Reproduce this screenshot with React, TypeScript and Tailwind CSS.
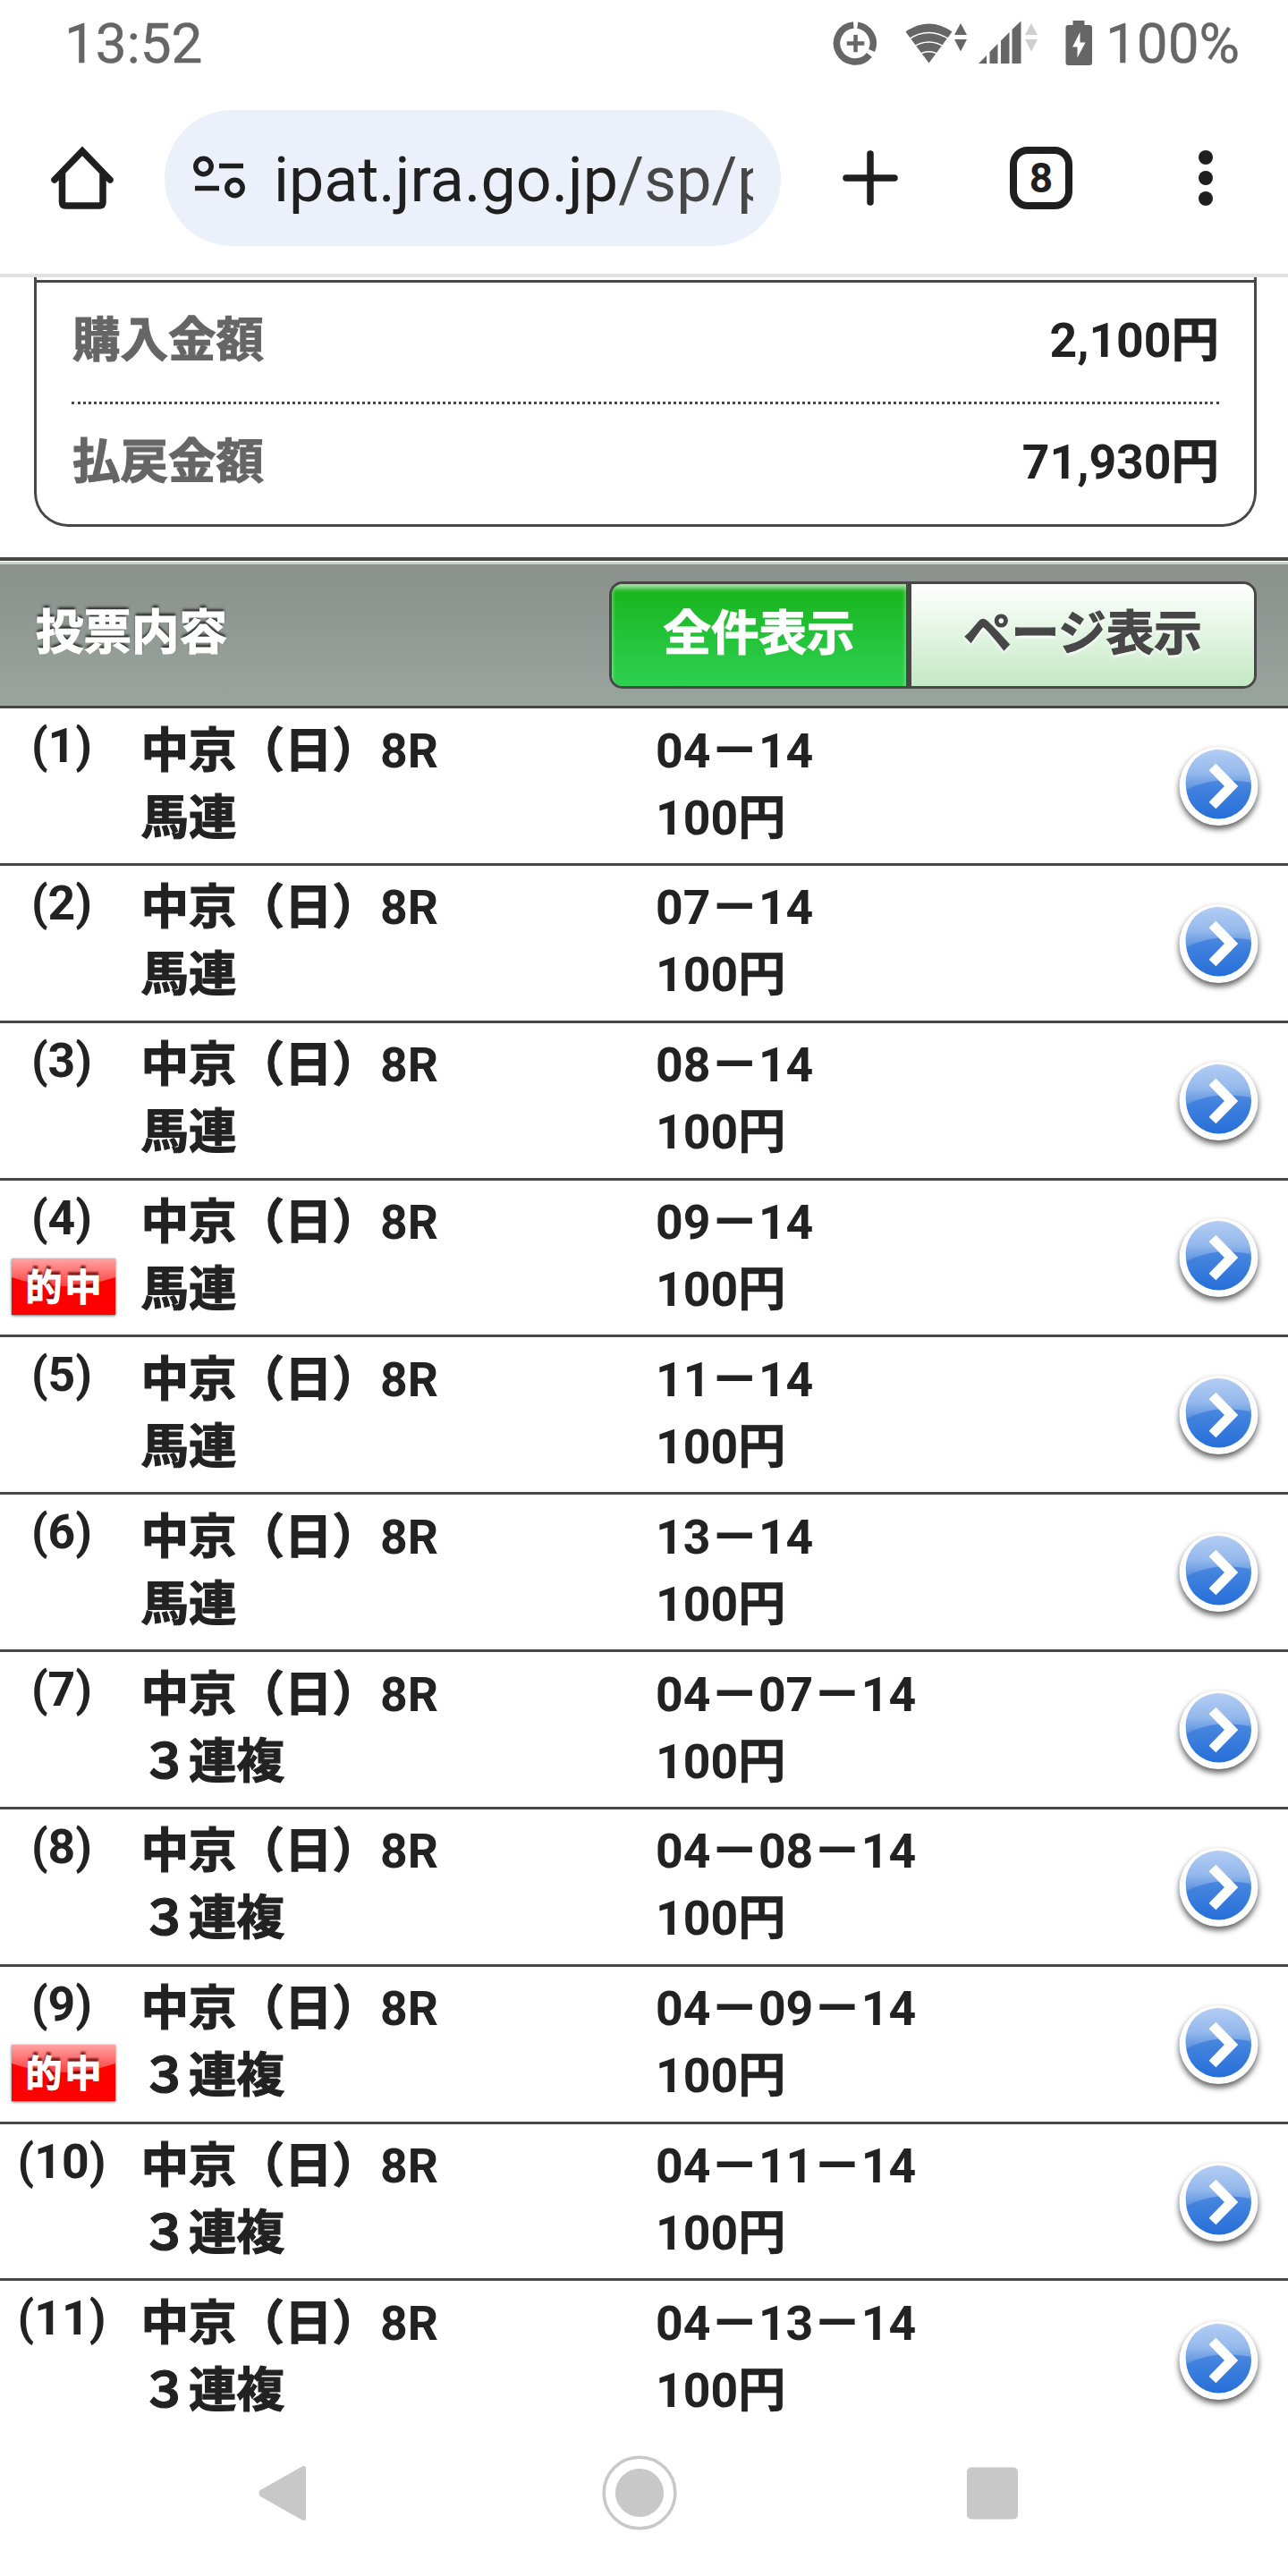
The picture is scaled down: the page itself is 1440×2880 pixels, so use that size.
import { clsx } from "clsx";

const BETS = [
  { no: 1, type: "馬連", combo: "04－14", hit: false },
  { no: 2, type: "馬連", combo: "07－14", hit: false },
  { no: 3, type: "馬連", combo: "08－14", hit: false },
  { no: 4, type: "馬連", combo: "09－14", hit: true },
  { no: 5, type: "馬連", combo: "11－14", hit: false },
  { no: 6, type: "馬連", combo: "13－14", hit: false },
  { no: 7, type: "３連複", combo: "04－07－14", hit: false },
  { no: 8, type: "３連複", combo: "04－08－14", hit: false },
  { no: 9, type: "３連複", combo: "04－09－14", hit: true },
  { no: 10, type: "３連複", combo: "04－11－14", hit: false },
  { no: 11, type: "３連複", combo: "04－13－14", hit: false },
];

function StatusIcons() {
  return (
    <svg width="300" height="56" viewBox="926 20 300 56" fill="#666">
      {/* Data saver */}
      <g fill="none" stroke="#666" strokeWidth="7.5">
        <path d="M958.8 27.1 A20.5 20.5 0 0 1 974.6 55.5" />
        <path d="M971.9 60.4 A20.5 20.5 0 1 1 954.3 27.1" />
      </g>
      <path d="M954.3 38h4.500v7.200h7.500v4.500h-7.500v7.500h-4.500v-7.500h-7.500v-4.500h7.500z" />
      {/* Wifi */}
      <path d="M1012.5 34.5 Q1038.5 16.5 1064.5 34.5 L1038.5 69.5z" />
      <g fill="none" stroke="#fff" strokeWidth="1.6">
        <path d="M1015 43.5 Q1038.5 27.500 1062 43.5" />
        <path d="M1020 52 Q1038.500 40 1057 52" />
        <path d="M1026 61 Q1038.500 52.500 1051 61" />
      </g>
      <path d="M1067 38 L1074 25 L1081 38z M1067 43 H1081 L1074 56.500z" />
      {/* Mobile signal */}
      <path d="M1094 70 L1103 61 V70z M1106.500 57 L1115.500 48 V70 H1106.500z M1119 44.500 L1128.500 35 V70 H1119z M1131.500 32 L1141.500 22.500 V70 H1131.500z" />
      <path fill="#cfcfcf" d="M1146 38 L1153 25 L1160 38z M1146 43 H1160 L1153 56.500z" />
      {/* Battery */}
      <path d="M1199.500 22h13v5h5.500q3 0 3 3v39q0 3-3 3h-23.500q-3 0-3-3v-39q0-3 3-3h5z" />
      <path fill="#fff" d="M1207.500 35 L1199 51.500 H1204.500 V63.500 L1213.500 46.500 H1207.500z" />
    </svg>
  );
}

function ArrowBadge() {
  return (
    <svg className="mt-[1px]" width="110" height="110" viewBox="-55.5 -55 110 110">
      <defs>
        <linearGradient id="blue" x1="0" y1="0" x2="0" y2="1">
          <stop offset="0" stopColor="#6f9fe6" />
          <stop offset="0.5" stopColor="#4483dd" />
          <stop offset="1" stopColor="#256fd9" />
        </linearGradient>
        <linearGradient id="shine" x1="0" y1="0" x2="0" y2="1">
          <stop offset="0" stopColor="#b4cdf3" />
          <stop offset="0.6" stopColor="#94b8ec" />
          <stop offset="1" stopColor="#5a91e1" />
        </linearGradient>
        <filter id="soft" x="-30%" y="-30%" width="160%" height="160%">
          <feGaussianBlur stdDeviation="3.5" />
        </filter>
      </defs>
      <circle cy="4" r="44" fill="#000" opacity="0.65" filter="url(#soft)" />
      <circle r="44" fill="#fff" />
      <circle r="36.500" fill="url(#blue)" />
      <path d="M-36 4 A36.500 36.500 0 1 1 36 -4 Q8 -9 -10 -5 Q-24 -2 -36 4z" fill="url(#shine)" />
      <path d="M-7 -21.500 L14 0 L-7 21.500" fill="none" stroke="#fff" strokeWidth="11" />
    </svg>
  );
}

function HitBadge() {
  return (
    <span className="relative ml-[3px] mt-[10px] flex h-[63px] w-[116px] items-center justify-center bg-[#fe0000] shadow-[0_1px_3px_rgba(0,0,0,0.6)]">
      <svg className="absolute inset-0" width="116" height="63" viewBox="0 0 116 63">
        <linearGradient id="gloss" x1="0" y1="0" x2="0" y2="1">
          <stop offset="0" stopColor="#ffa3a3" />
          <stop offset="1" stopColor="#ff4040" />
        </linearGradient>
        <path d="M0 0 H116 V21 Q58 41 0 21z" fill="url(#gloss)" />
      </svg>
      <span className="relative pl-[4px] pt-[4px] text-[41px] leading-none tracking-[3px] text-white [-webkit-text-stroke:1px_white] [text-shadow:0_-4px_2px_rgba(90,0,0,0.75)]">
        的中
      </span>
    </span>
  );
}

function BetRow({ bet }: { bet: (typeof BETS)[number] }) {
  const last = bet.no === BETS.length;
  return (
    <li
      className={clsx(
        "flex h-[175.850px] shrink-0 border-[#474747]",
        !last && "border-b-[3px]"
      )}
    >
      <div className="flex w-[157.5px] flex-col items-center pr-[19.5px] pt-[4px]">
        <span className="h-[73px] leading-[75px]">({bet.no})</span>
        {bet.hit && <HitBadge />}
      </div>
      <div className="w-[575.5px] pt-[9.5px] leading-[75px]">
        <p>
          <span className="[-webkit-text-stroke:1.2px]">中京（日）</span>8R
        </p>
        <p className="[-webkit-text-stroke:1.2px]">{bet.type}</p>
      </div>
      <div className="flex-1 pt-[9.5px] leading-[75px]">
        <p>
          {bet.combo.split("－").map((horse, i) => (
            <span key={horse}>
              {i > 0 && <span className="[-webkit-text-stroke:1.2px]">－</span>}
              {horse}
            </span>
          ))}
        </p>
        <p>
          100<span className="[-webkit-text-stroke:0.6px]">円</span>
        </p>
      </div>
      <button className="flex w-[133px] items-center" aria-label="詳細">
        <ArrowBadge />
      </button>
    </li>
  );
}

export default function App() {
  return (
    <main className="flex h-[2880px] w-[1440px] flex-col overflow-hidden bg-white font-[Roboto,'Noto_Sans_CJK_JP',sans-serif] text-[#222]">
      {/* Status bar */}
      <header className="flex h-[98px] shrink-0 items-center text-[62px] leading-none text-[#666] [-webkit-text-stroke:0.5px]">
        <span className="ml-[72px] flex-1">13:52</span>
        <StatusIcons />
        <span className="mr-[53px] w-[161px] pl-[10px]">100%</span>
      </header>

      {/* Browser toolbar */}
      <nav className="flex h-[212px] shrink-0 items-start border-b-4 border-[#e0e2df] pt-[25px]">
        <svg className="ml-[50px] mt-[36px]" width="84" height="80" viewBox="50 159 84 80">
          <path
            d="M61 201 L92 169 L123 201 M69.500 194 V226 Q69.500 230 73.500 230 H111 Q115 230 115 226 V194"
            fill="none"
            stroke="#1f1f1f"
            strokeWidth="7.500"
            strokeLinecap="round"
          />
        </svg>
        <div className="ml-[50px] flex h-[152px] w-[689px] items-center rounded-full bg-[#ecf0fa] pl-[30px]">
          <svg width="60" height="60" viewBox="214 170 60 60" fill="none" stroke="#1f1f1f" strokeWidth="5.500">
            <circle cx="227.500" cy="187" r="8.700" />
            <circle cx="262.500" cy="211" r="8.700" />
            <path d="M245 186.500H272 M218 211.500H245" />
          </svg>
          <div className="ml-[32px] w-[536px] overflow-hidden whitespace-nowrap pt-[4px] text-[70px] leading-[100px] text-[#1f1f1f]">
            ipat.jra.go.jp<span className="text-[#474747]">/sp/p</span>
          </div>
        </div>
        <svg className="ml-[65px] mt-[41px]" width="70" height="70" viewBox="0 0 70 70">
          <path d="M35 8V62M8 35H62" stroke="#1f1f1f" strokeWidth="7.5" strokeLinecap="round" />
        </svg>
        <div className="ml-[121px] mt-[41px] flex h-[70px] w-[70px] items-center justify-center rounded-[20px] border-8 border-[#1f1f1f] text-[46px] font-bold leading-none text-[#1f1f1f]">
          8
        </div>
        <svg className="ml-[139px] mt-[41px]" width="20" height="70" viewBox="0 0 20 70" fill="#1f1f1f">
          <circle cx="10" cy="12" r="8" />
          <circle cx="10" cy="35" r="8" />
          <circle cx="10" cy="58" r="8" />
        </svg>
      </nav>

      {/* Totals */}
      <section className="mx-[38px] h-[279px] w-[1367px] shrink-0 rounded-b-[38px] border-x-[3px] border-b-[3px] border-[#474747] text-[53.5px] font-bold leading-[80px]">
        <div className="mt-[3px] border-t-[3px] border-[#474747] px-[39px]">
          <div className="flex h-[136px] items-start justify-between border-b-[3px] border-dotted border-[#474747] pt-[25px]">
            <span className="pl-[1px] text-[#666] [-webkit-text-stroke:1.2px]">購入金額</span>
            <span>
              2,100<span className="[-webkit-text-stroke:0.6px]">円</span>
            </span>
          </div>
          <div className="flex items-start justify-between pt-[25px]">
            <span className="pl-[1px] text-[#666] [-webkit-text-stroke:1.2px]">払戻金額</span>
            <span>
              71,930<span className="[-webkit-text-stroke:0.6px]">円</span>
            </span>
          </div>
        </div>
      </section>

      {/* Section heading with view toggle */}
      <section className="mt-[34px] flex h-[169px] shrink-0 items-start justify-between border-b-[3px] border-t-4 border-[#474747] bg-linear-to-b from-[#8a908b] to-[#9aa49e] pl-[40px] pr-[35px] pt-[23px] text-[53.5px] font-bold shadow-[inset_0_1px_0_#fff,inset_0_4px_0_#c8d3cc]">
        <h2 className="leading-[115px] text-white [-webkit-text-stroke:1.2px] [text-shadow:0_-3px_3px_rgba(0,0,0,0.75)]">投票内容</h2>
        <div className="flex h-[120px] w-[724px] overflow-hidden rounded-[15px] border-[3px] border-[#474747] leading-[106px] [-webkit-text-stroke:1.2px]">
          <button className="w-[335px] border-r-[6px] border-[#474747] bg-linear-to-b from-[#18b418] to-[#2dd14f] pb-[2px] text-white shadow-[inset_0_5px_5px_rgba(255,255,255,0.6)]">
            全件表示
          </button>
          <button className="flex-1 bg-linear-to-b from-white to-[#c4e9c4] pb-[2px] text-[#474747] [text-shadow:0_3px_3px_#fff]">
            ページ表示
          </button>
        </div>
      </section>

      <ul className="flex flex-col text-[53.5px] font-bold">
        {BETS.map((bet) => (
          <BetRow key={bet.no} bet={bet} />
        ))}
      </ul>

      {/* System navigation */}
      <footer className="flex h-[154px] shrink-0 pt-[16px]">
        <svg width="1440" height="90" viewBox="0 2742 1440 90" fill="#c8c8c8">
          <path d="M291 2784 L337 2758 Q342 2755.500 342 2760 V2815 Q342 2819.500 337 2817 L291 2791 Q288 2787.500 291 2784z" />
          <circle cx="715" cy="2787" r="39.800" fill="none" stroke="#c8c8c8" strokeWidth="3.500" />
          <circle cx="715" cy="2787" r="27" />
          <rect x="1081" y="2758.500" width="57" height="58" rx="5" />
        </svg>
      </footer>
    </main>
  );
}
